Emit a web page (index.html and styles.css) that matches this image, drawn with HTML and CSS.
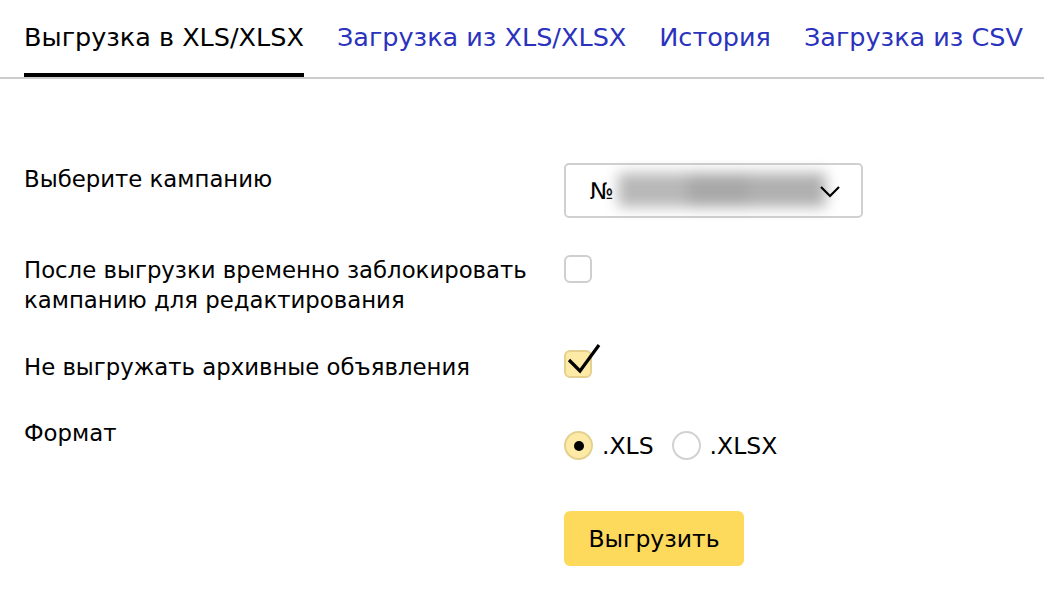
FILE: index.html
```html
<!DOCTYPE html>
<html lang="ru">
<head>
<meta charset="utf-8">
<link rel="stylesheet" href="styles.css">
</head>
<body>
<nav class="tabs">
  <a class="tab tab-active">Выгрузка в XLS/XLSX</a>
  <a class="tab">Загрузка из XLS/XLSX</a>
  <a class="tab">История</a>
  <a class="tab">Загрузка из CSV</a>
</nav>
<main class="form">
  <div class="row row-campaign">
    <div class="label">Выберите кампанию</div>
    <div class="control">
      <div class="select">
        <span class="select-text">№</span>
        <span class="blur"><span class="b1"></span><span class="b2"></span><span class="b3"></span></span>
        <svg class="chevron" width="22" height="14" viewBox="0 0 22 14"><path d="M2 2 L11 11 L20 2" fill="none" stroke="#000" stroke-width="2.2"/></svg>
      </div>
    </div>
  </div>
  <div class="row row-lock">
    <div class="label">После выгрузки временно заблокировать<br>кампанию для редактирования</div>
    <div class="control"><span class="checkbox"></span></div>
  </div>
  <div class="row row-archive">
    <div class="label">Не выгружать архивные объявления</div>
    <div class="control">
      <span class="checkbox checked">
        <svg class="tick" width="40" height="36" viewBox="0 0 40 36"><path d="M4 17 L15 28 L34 2" fill="none" stroke="#000" stroke-width="3.2" stroke-linejoin="miter"/></svg>
      </span>
    </div>
  </div>
  <div class="row row-format">
    <div class="label">Формат</div>
    <div class="control radios">
      <label class="radio-item"><span class="radio on"></span>.XLS</label>
      <label class="radio-item"><span class="radio"></span>.XLSX</label>
    </div>
  </div>
  <div class="row row-submit">
    <div class="label"></div>
    <div class="control"><button class="btn">Выгрузить</button></div>
  </div>
</main>
</body>
</html>
```

FILE: styles.css
```css
html, body {
  margin: 0;
  padding: 0;
  background: #fff;
}
body {
  font-family: "DejaVu Sans", "Liberation Sans", sans-serif;
  color: #000;
  width: 1044px;
  height: 592px;
  overflow: hidden;
}
.tabs {
  display: flex;
  gap: 33px;
  padding: 22px 0 0 24px;
  border-bottom: 2px solid #cccccc;
  height: 79px;
  box-sizing: border-box;
}
.tab {
  font-size: 25.5px;
  line-height: 31px;
  color: #2b32bd;
  white-space: nowrap;
  height: 55px;
  box-sizing: border-box;
  cursor: pointer;
}
.tab-active {
  color: #000;
  border-bottom: 4px solid #000;
  margin-bottom: -2px;
}
.form {
  padding: 0 0 0 24px;
}
.row {
  display: grid;
  grid-template-columns: 516px 1fr;
  gap: 24px;
  align-items: start;
}
.label {
  font-size: 22.8px;
  line-height: 30px;
  white-space: nowrap;
}
.row-campaign { margin-top: 84px; }
.row-campaign .label { margin-top: 1px; }
.row-lock { margin-top: 37px; }
.row-archive { margin-top: 35px; }
.row-archive .label { margin-top: 2px; }
.row-format { margin-top: 36px; }
.row-format .control { margin-top: 13px; }
.row-submit { margin-top: 51px; }

.select {
  position: relative;
  width: 299px;
  height: 55px;
  box-sizing: border-box;
  border: 2px solid #d0d0d0;
  border-radius: 5px;
  display: flex;
  align-items: center;
  padding-left: 24px;
}
.select-text {
  font-size: 23px;
}
.blur {
  position: absolute;
  left: 52px;
  top: 8px;
  width: 208px;
  height: 34px;
  display: flex;
  filter: blur(7px);
}
.blur span { display: block; height: 100%; }
.b1 { width: 70px; background: #b8b8b8; }
.b2 { width: 60px; background: #a8a8a8; }
.b3 { width: 78px; background: #b0b0b0; }
.chevron {
  position: absolute;
  right: 20px;
  top: 20px;
}
.checkbox {
  position: relative;
  display: block;
  width: 28px;
  height: 28px;
  box-sizing: border-box;
  border: 2px solid #cfcfcf;
  border-radius: 6px;
  background: #fff;
}
.checkbox.checked {
  background: #fdeaa6;
  border-color: #e6d08e;
}
.tick {
  position: absolute;
  left: -1px;
  top: -9px;
}
.radios {
  display: flex;
  align-items: center;
  gap: 18px;
}
.radio-item {
  display: flex;
  align-items: center;
  gap: 9px;
  font-size: 23.5px;
  line-height: 28px;
}
.radio {
  position: relative;
  display: block;
  width: 29px;
  height: 29px;
  box-sizing: border-box;
  border-radius: 50%;
  border: 2px solid #d2d2d2;
  background: #fff;
}
.radio.on {
  background: #fdeaa6;
  border-color: #e6d08e;
}
.radio.on::after {
  content: "";
  position: absolute;
  left: 50%;
  top: 50%;
  width: 10px;
  height: 10px;
  margin: -5px 0 0 -5px;
  border-radius: 50%;
  background: #000;
}
.btn {
  width: 180px;
  height: 55px;
  border: none;
  border-radius: 6px;
  background: #fdda5c;
  font-family: inherit;
  font-size: 23.5px;
  color: #000;
  padding: 0;
}
```
